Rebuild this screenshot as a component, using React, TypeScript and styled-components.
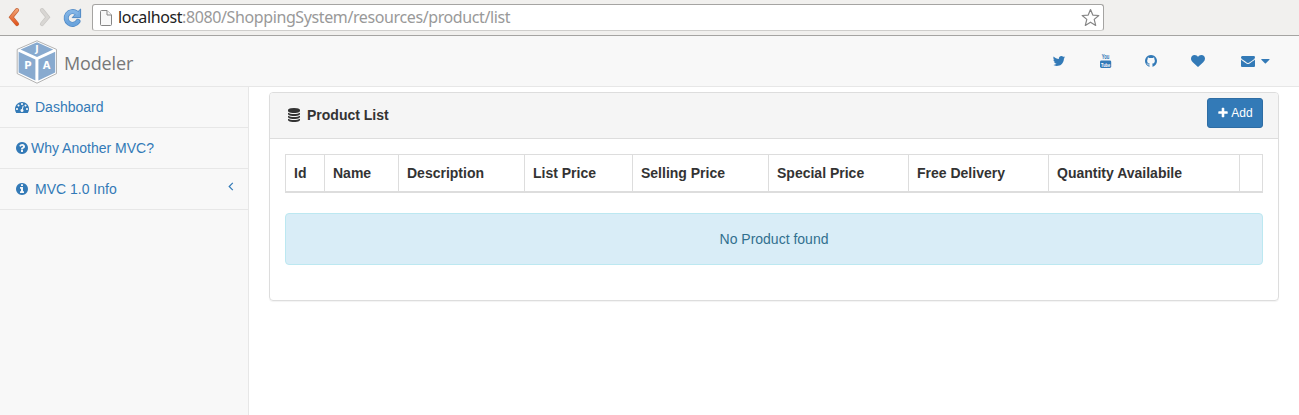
import React from "react";
import styled, { createGlobalStyle } from "styled-components";

const Global = createGlobalStyle`
  * { box-sizing: border-box; }
  body {
    margin: 0;
    background: #fff;
    color: #333;
    font: 14px/20px "Liberation Sans", Arial, sans-serif;
  }
`;

const paths = {
  twitter:
    "M1684 408q-67 98-162 167 1 14 1 42 0 130-38 259.5t-115.5 248.5-184.5 210.5-258 146-323 54.5q-271 0-496-145 35 4 78 4 225 0 401-138-105-2-188-64.5t-114-159.5q33 5 61 5 43 0 85-11-112-23-185.5-111.5t-73.5-205.5v-4q68 38 146 41-66-44-105-115t-39-154q0-88 44-163 121 149 294.5 238.5t371.5 99.5q-8-38-8-74 0-134 94.5-228.5t228.5-94.5q140 0 236 102 109-21 205-78-37 115-142 178 93-10 186-50z",
  github:
    "M896 128q209 0 385.5 103t279.5 279.5 103 385.5q0 251-146.5 451.5t-378.5 277.5q-27 5-40-7t-13-30q0-3 .5-76.5t.5-134.5q0-97-52-142 57-6 102.5-18t94-39 81-66.5 53-105 20.5-150.5q0-119-79-206 37-91-8-204-28-9-81 11t-92 44l-38 24q-93-26-192-26t-192 26q-16-11-42.5-27t-83.5-38.5-85-13.5q-45 113-8 204-79 87-79 206 0 85 20.5 150t52.5 105 80.5 67 94 39 102.5 18q-39 36-49 103-21 10-45 15t-57 5-65.5-21.5-55.5-62.5q-19-32-48.5-52t-49.5-24l-20-3q-21 0-29 4.5t-5 11.5 9 14 13 12l7 5q22 10 43.5 38t31.5 51l10 23q13 38 44 61.5t67 30 69.5 7 55.5-3.5l23-4q0 38 .5 88.5t.5 54.5q0 18-13 30t-40 7q-232-77-378.5-277.5t-146.5-451.5q0-209 103-385.5t279.5-279.5 385.5-103z",
  heart:
    "M896 1664q-26 0-44-18l-624-602q-10-8-27.5-26t-55.5-65.5-68-97.5-53.5-121-23.5-138q0-220 127-344t351-124q62 0 126.5 21.5t120 58 95.5 68.5 76 68q36-36 76-68t95.5-68.5 120-58 126.5-21.5q224 0 351 124t127 344q0 221-229 450l-623 600q-18 18-44 18z",
  envelope:
    "M1792 710v794q0 66-47 113t-113 47h-1472q-66 0-113-47t-47-113v-794q44 49 101 87 362 246 497 345 57 42 92.5 65.5t94.5 48 110 24.5h2q51 0 110-24.5t94.5-48 92.5-65.5q170-123 498-345 57-39 100-87zm0-294q0 79-49 151t-122 123q-376 261-468 325-10 7-42.5 31t-54 38.5-52 32.5-57.5 27-50 9h-2q-23 0-50-9t-57.5-27-52-32.5-54-38.5-42.5-31q-91-64-262-182.5t-205-142.5q-62-42-117-115.5t-55-136.5q0-78 41.5-130t118.5-52h1472q65 0 112.5 47t47.5 113z",
  gauge:
    "M384 1152q0-53-37.5-90.5t-90.5-37.5-90.5 37.5-37.5 90.5 37.5 90.5 90.5 37.5 90.5-37.5 37.5-90.5zm192-448q0-53-37.5-90.5t-90.5-37.5-90.5 37.5-37.5 90.5 37.5 90.5 90.5 37.5 90.5-37.5 37.5-90.5zm428 481l101-382q6-26-7.5-48.5t-38.5-29.5-48 6.5-30 39.5l-101 382q-60 5-107 43.5t-63 98.5q-20 77 20 146t117 89 146-20 89-117q16-60-6-117t-72-91zm660-33q0-53-37.5-90.5t-90.5-37.5-90.5 37.5-37.5 90.5 37.5 90.5 90.5 37.5 90.5-37.5 37.5-90.5zm-640-640q0-53-37.5-90.5t-90.5-37.5-90.5 37.5-37.5 90.5 37.5 90.5 90.5 37.5 90.5-37.5 37.5-90.5zm448 192q0-53-37.5-90.5t-90.5-37.5-90.5 37.5-37.5 90.5 37.5 90.5 90.5 37.5 90.5-37.5 37.5-90.5zm320 448q0 261-141 483-19 29-54 29h-1402q-35 0-54-29-141-221-141-483 0-182 71-348t191-286 286-191 348-71 348 71 286 191 191 286 71 348z",
  question:
    "M1024 1376v-192q0-14-9-23t-23-9h-192q-14 0-23 9t-9 23v192q0 14 9 23t23 9h192q14 0 23-9t9-23zm256-672q0-88-55.5-163t-138.5-116-170-41q-243 0-371 213-15 24 8 42l132 100q7 6 19 6 16 0 25-12 53-68 86-92 34-24 86-24 48 0 85.5 26t37.5 59q0 38-20 61t-68 45q-63 28-115.5 86.5t-52.5 125.5v36q0 14 9 23t23 9h192q14 0 23-9t9-23q0-19 21.5-49.5t54.5-49.5q32-18 49-28.5t46-35 44.5-48 28-60.5 12.5-81zm384 192q0 209-103 385.5t-279.5 279.5-385.5 103-385.5-103-279.5-279.5-103-385.5 103-385.5 279.5-279.5 385.5-103 385.5 103 279.5 279.5 103 385.5z",
  info:
    "M1152 1376v-160q0-14-9-23t-23-9h-96v-512q0-14-9-23t-23-9h-320q-14 0-23 9t-9 23v160q0 14 9 23t23 9h96v320h-96q-14 0-23 9t-9 23v160q0 14 9 23t23 9h448q14 0 23-9t9-23zm-128-896v-160q0-14-9-23t-23-9h-192q-14 0-23 9t-9 23v160q0 14 9 23t23 9h192q14 0 23-9t9-23zm640 416q0 209-103 385.5t-279.5 279.5-385.5 103-385.5-103-279.5-279.5-103-385.5 103-385.5 279.5-279.5 385.5-103 385.5 103 279.5 279.5 103 385.5z",
  database:
    "M896 768q237 0 443-43t325-127v170q0 69-103 128t-280 93.5-385 34.5-385-34.5-280-93.5-103-128v-170q119 84 325 127t443 43zm0 768q237 0 443-43t325-127v170q0 69-103 128t-280 93.5-385 34.5-385-34.5-280-93.5-103-128v-170q119 84 325 127t443 43zm0-384q237 0 443-43t325-127v170q0 69-103 128t-280 93.5-385 34.5-385-34.5-280-93.5-103-128v-170q119 84 325 127t443 43zm0-1152q208 0 385 34.5t280 93.5 103 128v128q0 69-103 128t-280 93.5-385 34.5-385-34.5-280-93.5-103-128v-128q0-69 103-128t280-93.5 385-34.5z",
  plus:
    "M1600 736v192q0 40-28 68t-68 28h-416v416q0 40-28 68t-68 28h-192q-40 0-68-28t-28-68v-416h-416q-40 0-68-28t-28-68v-192q0-40 28-68t68-28h416v-416q0-40 28-68t68-28h192q40 0 68 28t28 68v416h416q40 0 68 28t28 68z",
};

const Svg = styled.svg`
  display: block;
  flex: none;
`;

function Icon({ name, size = 14 }: { name: keyof typeof paths; size?: number }) {
  return (
    <Svg width={size} height={size} viewBox="0 0 1792 1792" fill="currentColor">
      <path d={paths[name]} />
    </Svg>
  );
}

const Page = styled.div`
  display: flex;
  flex-direction: column;
  height: 415px;
  overflow: hidden;
`;

/* browser toolbar */
const Toolbar = styled.div`
  display: flex;
  align-items: flex-start;
  height: 36px;
  flex: none;
  padding-top: 4px;
  background: #f1f0ee;
  border-bottom: 1px solid #a5a4a2;
`;
const NavButtons = styled.div`
  display: flex;
  width: 92px;
  flex: none;
`;
const AddressBar = styled.div`
  display: flex;
  align-items: center;
  width: 1012px;
  height: 27px;
  padding: 0 3px 0 7px;
  background: #fff;
  border: 1px solid #a5a4a2;
  border-bottom-color: #cfcecc;
  border-radius: 3px;
`;
const Url = styled.div`
  flex: 1;
  margin: -2px 0 0 6px;
  font: 16px/24px "Noto Sans", sans-serif;
  letter-spacing: -0.39px;
  color: #999;
  white-space: nowrap;
`;
const Host = styled.span`
  color: #222;
`;

/* application navbar */
const Navbar = styled.header`
  display: flex;
  justify-content: space-between;
  align-items: flex-start;
  height: 51px;
  flex: none;
  background: #f8f8f8;
  border-bottom: 1px solid #e7e7e7;
`;
const Brand = styled.div`
  display: flex;
  padding: 4px 0 0 16px;
`;
const BrandName = styled.span`
  margin: 11px 0 0 6px;
  font: 18px/25px "Open Sans", sans-serif;
  letter-spacing: -0.15px;
  color: #777;
`;
const NavLinks = styled.nav`
  display: flex;
  padding: 18px 29px 0 0;
  color: #337ab7;
`;
const NavLink = styled.a<{ $gap?: number }>`
  display: flex;
  align-items: center;
  gap: 6px;
  margin-right: ${(p) => p.$gap ?? 0}px;
`;

/* content below the navbar */
const Body = styled.div`
  display: flex;
  flex: 1;
`;
const Sidebar = styled.aside`
  width: 249px;
  flex: none;
  background: #f8f8f8;
  border-right: 1px solid #e7e7e7;
`;
const MenuItem = styled.a<{ $gap: number }>`
  display: flex;
  align-items: center;
  gap: ${(p) => p.$gap}px;
  height: 41px;
  padding: 0 14px 0 15px;
  color: #337ab7;
  border-bottom: 1px solid #e7e7e7;
`;
const Arrow = styled(Svg)`
  margin: 0 0 5px auto;
`;
const Main = styled.main`
  flex: 1;
  padding: 5px 20px 0;
`;
const Panel = styled.section`
  height: 209px;
  border: 1px solid #ddd;
  border-radius: 4px;
  box-shadow: 0 1px 1px rgba(0, 0, 0, 0.05);
`;
const PanelHeading = styled.div`
  display: flex;
  align-items: flex-start;
  height: 46px;
  padding: 5px 15px 0 17px;
  background: #f5f5f5;
  border-bottom: 1px solid #ddd;
  border-radius: 3px 3px 0 0;
`;
const PanelTitle = styled.div`
  display: flex;
  align-items: center;
  gap: 6px;
  flex: 1;
  margin-top: 7px;
  font-weight: bold;
`;
const AddButton = styled.button`
  display: flex;
  align-items: center;
  justify-content: center;
  gap: 2px;
  width: 56px;
  height: 30px;
  padding: 0;
  font: 12px/18px "Liberation Sans", Arial, sans-serif;
  color: #fff;
  background: #337ab7;
  border: 1px solid #2e6da4;
  border-radius: 3px;
`;
const PanelBody = styled.div`
  padding: 15px;
`;
const HeaderRow = styled.div`
  display: grid;
  grid-template-columns: 39px 74px 126px 108px 136px 140px 140px 191px 1fr;
  height: 39px;
  border: 1px solid #ddd;
  border-bottom-width: 2px;
`;
const HeaderCell = styled.div`
  padding: 8px;
  font-weight: bold;
  white-space: nowrap;
  & + & {
    border-left: 1px solid #ddd;
    margin-left: -1px;
  }
`;
const Alert = styled.div`
  display: flex;
  align-items: center;
  justify-content: center;
  height: 52px;
  margin-top: 20px;
  color: #31708f;
  background: #d9edf7;
  border: 1px solid #bce8f1;
  border-radius: 4px;
`;

const columns = [
  "Id",
  "Name",
  "Description",
  "List Price",
  "Selling Price",
  "Special Price",
  "Free Delivery",
  "Quantity Availabile",
  "",
];

function BrowserButtons() {
  return (
    <Svg width="92" height="28" viewBox="0 4 92 28" fill="none">
      <defs>
        <linearGradient id="back" x1="0" y1="0" x2="0" y2="1">
          <stop offset="0" stopColor="#f0a071" />
          <stop offset="1" stopColor="#e2561f" />
        </linearGradient>
        <linearGradient id="reload" x1="0" y1="0" x2="0" y2="1">
          <stop offset="0" stopColor="#83b5e6" />
          <stop offset="1" stopColor="#69a3dc" />
        </linearGradient>
      </defs>
      <path d="M17 10.2 11.3 17.2 17 24" stroke="#c4653a" strokeWidth="4.2" strokeLinecap="round" />
      <path d="M17 10.2 11.3 17.2 17 24" stroke="url(#back)" strokeWidth="2.8" strokeLinecap="round" />
      <path d="M42 10.2 47.7 17.2 42 24" stroke="#c9c7c4" strokeWidth="4.2" strokeLinecap="round" />
      <path d="M42 10.2 47.7 17.2 42 24" stroke="#d8d6d3" strokeWidth="2.8" strokeLinecap="round" />
      <path d="M76.6 13A6.4 6.4 0 1 0 78 21.4" stroke="#4f88c4" strokeWidth="5" strokeLinecap="round" />
      <path d="M80.6 9v8.6h-8.4l3-3.2z" fill="#75abe0" stroke="#4f88c4" strokeWidth="1" strokeLinejoin="round" />
      <path d="M76.6 13A6.4 6.4 0 1 0 78 21.4" stroke="url(#reload)" strokeWidth="3.6" strokeLinecap="round" />
    </Svg>
  );
}

function CubeLogo() {
  return (
    <Svg width="42" height="44" viewBox="0 0 42 44">
      <path d="M21 .8 40.5 9.4V33.6L21 43.2 1.2 33.6V9.4z" fill="#fff" stroke="#a0a0a0" strokeWidth="0.8" />
      <path d="M21 2.3 37.2 9.4 21 17 4.5 9.4z" fill="#88aacf" />
      <path d="M2.6 11.8 19.4 19.6V40.5L2.6 32.6z" fill="#88aacf" />
      <path d="M39.2 11.8 22.4 19.6V40.5L39.2 32.6z" fill="#88aacf" />
      <g fill="#fff" fontFamily="'DejaVu Sans', sans-serif" fontWeight="700" textAnchor="middle">
        <text x="21" y="12.2" fontSize="9">J</text>
        <text x="12" y="29.3" fontSize="10">P</text>
        <text x="30.5" y="29.3" fontSize="10">A</text>
      </g>
    </Svg>
  );
}

const YoutubeSvg = styled(Svg)`
  overflow: visible;
`;

function YoutubeIcon() {
  return (
    <YoutubeSvg width="12" height="14" viewBox="0 0 12 14">
      <rect x="0" y="6.4" width="11.2" height="7.6" rx="1.4" fill="#337ab7" />
      <g fontFamily="'Liberation Sans', Arial, sans-serif" fontWeight="700">
        <text x="1.8" y="5.3" fontSize="6.5" fill="#337ab7" textLength="7.6" lengthAdjust="spacingAndGlyphs">You</text>
        <text x="1.1" y="12.5" fontSize="6" fill="#fff" textLength="9" lengthAdjust="spacingAndGlyphs">Tube</text>
      </g>
    </YoutubeSvg>
  );
}

export default function App() {
  return (
    <Page>
      <Global />
      <Toolbar>
        <NavButtons>
          <BrowserButtons />
        </NavButtons>
        <AddressBar>
          <Svg width="12" height="16" viewBox="0 0 12 16" fill="#f8f8f8" stroke="#858585">
            <path d="M.5 1.5q0-1 1-1H7L11.5 5v9.5q0 1-1 1h-9q-1 0-1-1z" />
            <path d="M7 .5V5h4.5" />
          </Svg>
          <Url>
            <Host>localhost</Host>:8080/ShoppingSystem/resources/product/list
          </Url>
          <Svg width="20" height="20" viewBox="0 0 20 20" fill="#fff" stroke="#858585" strokeWidth="1.2" strokeLinejoin="round">
            <path d="M10.5 1.5 12.8 7.1 18.8 7.5 14.2 11.4 15.7 17.4 10.5 14.2 5.3 17.4 6.8 11.4 2.2 7.5 8.2 7.1z" />
          </Svg>
        </AddressBar>
      </Toolbar>
      <Navbar>
        <Brand>
          <CubeLogo />
          <BrandName>Modeler</BrandName>
        </Brand>
        <NavLinks>
          <NavLink $gap={34}><Icon name="twitter" /></NavLink>
          <NavLink $gap={32}><YoutubeIcon /></NavLink>
          <NavLink $gap={33}><Icon name="github" /></NavLink>
          <NavLink $gap={36}><Icon name="heart" /></NavLink>
          <NavLink>
            <Icon name="envelope" />
            <Svg width="9" height="14" viewBox="0 0 9 14" fill="currentColor">
              <path d="M.6 5h7.6q.6.2.2.8L4.9 9.2q-.5.4-1 0L.4 5.8Q0 5.2.6 5z" />
            </Svg>
          </NavLink>
        </NavLinks>
      </Navbar>
      <Body>
        <Sidebar>
          <MenuItem $gap={6}><Icon name="gauge" />Dashboard</MenuItem>
          <MenuItem $gap={2}><Icon name="question" />Why Another MVC?</MenuItem>
          <MenuItem $gap={6}>
            <Icon name="info" />MVC 1.0 Info
            <Arrow width="6" height="10" viewBox="0 0 6 10" fill="none" stroke="currentColor" strokeWidth="1.2">
              <path d="M4.8.8 1.2 4.5l3.6 3.7" />
            </Arrow>
          </MenuItem>
        </Sidebar>
        <Main>
          <Panel>
            <PanelHeading>
              <PanelTitle><Icon name="database" />Product List</PanelTitle>
              <AddButton><Icon name="plus" size={12} />Add</AddButton>
            </PanelHeading>
            <PanelBody>
              <HeaderRow>
                {columns.map((label, i) => (
                  <HeaderCell key={i}>{label}</HeaderCell>
                ))}
              </HeaderRow>
              <Alert>No Product found</Alert>
            </PanelBody>
          </Panel>
        </Main>
      </Body>
    </Page>
  );
}
